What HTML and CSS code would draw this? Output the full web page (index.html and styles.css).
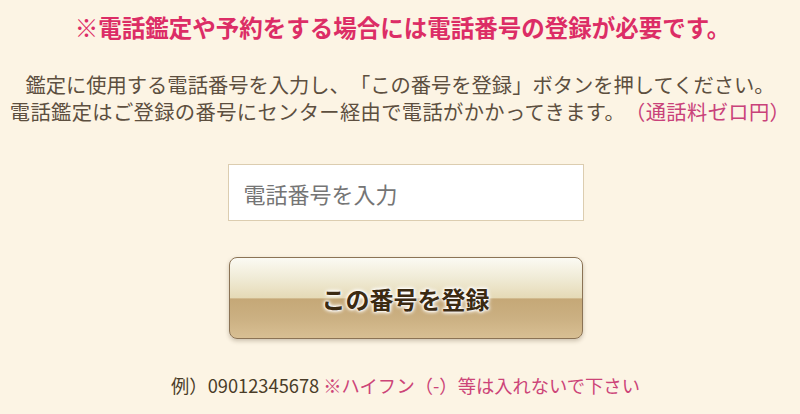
FILE: index.html
```html
<!DOCTYPE html>
<html lang="ja">
<head>
<meta charset="utf-8">
<title>電話番号の登録</title>
<link rel="stylesheet" href="styles.css">
</head>
<body>
<main class="page">
  <h1 class="notice">※電話鑑定や予約をする場合には電話番号の登録が必要です。</h1>
  <p class="lead">鑑定に使用する電話番号を入力し、「この番号を登録」ボタンを押してください。<br><span class="lead-2">電話鑑定はご登録の番号にセンター経由で電話がかかってきます。<span class="free">（通話料ゼロ円）</span></span></p>
  <form class="form">
    <input class="tel" type="tel" placeholder="電話番号を入力">
    <button class="submit" type="button">この番号を登録</button>
    <p class="example">例）09012345678 <span class="warn">※ハイフン（-）等は入れないで下さい</span></p>
  </form>
</main>
</body>
</html>
```

FILE: styles.css
```css
html, body {
  margin: 0;
  padding: 0;
  background: #fcf4e4;
}
body {
  font-family: "Noto Sans CJK JP", "Noto Sans", sans-serif;
  color: #5a4c3c;
  text-spacing-trim: space-all;
}
.page {
  display: flex;
  flex-direction: column;
  align-items: center;
  padding-top: 12px;
}
.notice {
  margin: 0 0 0 5px;
  font-size: 23.5px;
  line-height: 30px;
  font-weight: 700;
  color: #dc2d66;
  text-align: center;
  white-space: nowrap;
}
.lead {
  margin: 29px 0 0;
  font-size: 20.3px;
  line-height: 27px;
  text-align: center;
  white-space: nowrap;
  color: #5d4f3f;
}
.lead-2 {
  letter-spacing: 0.35px;
}
.free {
  color: #c9427a;
}
.form {
  display: flex;
  flex-direction: column;
  align-items: center;
  margin: 39px 0 0 11px;
}
.tel {
  box-sizing: border-box;
  width: 356px;
  height: 57px;
  margin: 0;
  padding: 0 15px;
  border: 1px solid #dccdb0;
  background: #fff;
  font-family: inherit;
  font-size: 22px;
  color: #333;
  outline: none;
  text-spacing-trim: space-all;
}
.tel::placeholder {
  color: #757575;
}
.submit {
  box-sizing: border-box;
  width: 354px;
  height: 82px;
  margin-top: 36px;
  border: 1px solid #8b7355;
  border-radius: 8px;
  background: linear-gradient(to bottom, #fbfaf3 0%, #f0ebd6 25%, #e5dab6 50%, #c5a877 51%, #cbb082 75%, #d8bf93 100%);
  box-shadow: 0 2px 4px rgba(60, 40, 10, 0.25);
  font-family: inherit;
  font-size: 24px;
  font-weight: 700;
  color: #3b2a12;
  text-shadow: 0 0 2px #fff, 0 0 3px #fff, 0 0 4px #fff, 0 0 5px #fff;
  cursor: pointer;
  text-spacing-trim: space-all;
}
.example {
  margin: 34px 0 0;
  font-size: 18.3px;
  line-height: 24px;
  color: #4a3c28;
  white-space: nowrap;
}
.warn {
  color: #cc4478;
}
```
